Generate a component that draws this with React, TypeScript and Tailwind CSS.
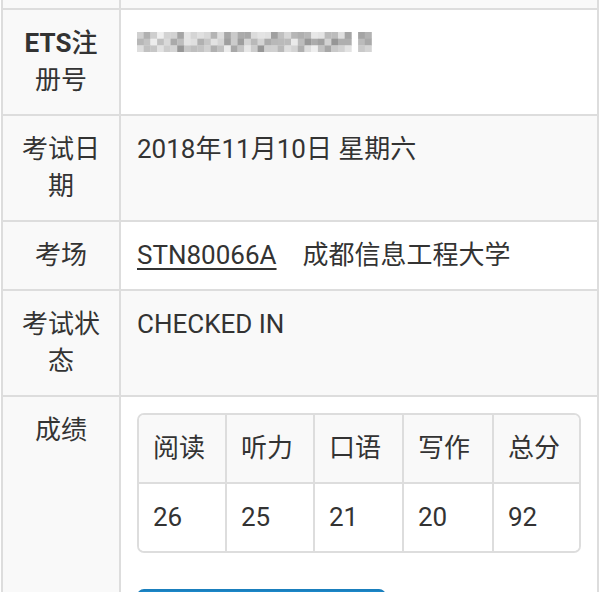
import React from "react";

function Mosaic() {
  const cols = 35;
  const rows = 3;
  const s = 6.7;
  let seed = 12345;
  const rand = () => {
    seed = (seed * 1103515245 + 12345) % 2147483648;
    return seed / 2147483648;
  };
  const cells: React.ReactNode[] = [];
  for (let r = 0; r < rows; r++) {
    for (let c = 0; c < cols; c++) {
      if (c === 32) continue;
      const v = Math.floor(150 + rand() * 90);
      cells.push(
        <rect key={`${r}-${c}`} x={c * s} y={r * s} width={s + 0.3} height={s + 0.3} fill={`rgb(${v},${v},${v})`} />
      );
    }
  }
  return (
    <svg width={cols * s} height={rows * s} className="block">
      {cells}
    </svg>
  );
}

function Row({
  label,
  striped,
  children,
}: {
  label: React.ReactNode;
  striped: boolean;
  children: React.ReactNode;
}) {
  return (
    <div className="flex border-t-2 border-[#dddddd]">
      <div className="w-[118px] shrink-0 bg-[#f9f9f9] px-[15px] py-[15px] text-center border-r-2 border-[#dddddd]">
        {label}
      </div>
      <div className={`flex-1 min-w-0 px-[16px] py-[15px] ${striped ? "bg-[#f9f9f9]" : "bg-white"}`}>{children}</div>
    </div>
  );
}

export default function App() {
  const heads = ["阅读", "听力", "口语", "写作", "总分"];
  const scores = ["26", "25", "21", "20", "92"];
  return (
    <div className="w-[600px] h-[592px] overflow-hidden bg-white font-[Roboto,'Noto_Sans_CJK_SC',sans-serif] text-[26px] leading-[37px] text-[#333333]">
      <div className="mx-[1px] border-x-2 border-[#dddddd]">
        <div className="flex h-[8px]">
          <div className="w-[118px] shrink-0 bg-[#f9f9f9] border-r-2 border-[#dddddd]" />
          <div className="flex-1 bg-[#f9f9f9]" />
        </div>
        <Row
          striped={false}
          label={
            <>
              <span className="font-bold">ETS</span>
              <span className="font-medium">注</span>册号
            </>
          }
        >
          <div className="pt-[7px]">
            <Mosaic />
          </div>
        </Row>
        <Row striped={true} label="考试日期">
          2018年11月10日 星期六
        </Row>
        <Row striped={false} label="考场">
          <span className="underline underline-offset-[4px] decoration-[2px]">STN80066A</span>
          <span className="ml-[26px]">成都信息工程大学</span>
        </Row>
        <Row striped={true} label="考试状态">
          CHECKED IN
        </Row>
        <Row striped={false} label="成绩">
          <div className="mt-[1px] border-2 border-[#dddddd] rounded-[7px] overflow-hidden mb-[36px]">
            <div className="grid grid-cols-[86px_88px_89px_90px_1fr] bg-[#f9f9f9]">
              {heads.map((h, i) => (
                <div key={h} className={`px-[14px] py-[15px] ${i > 0 ? "border-l-2 border-[#dddddd]" : ""}`}>
                  {h}
                </div>
              ))}
            </div>
            <div className="grid grid-cols-[86px_88px_89px_90px_1fr] bg-white border-t-2 border-[#dddddd]">
              {scores.map((s, i) => (
                <div key={i} className={`px-[14px] py-[15px] ${i > 0 ? "border-l-2 border-[#dddddd]" : ""}`}>
                  {s}
                </div>
              ))}
            </div>
          </div>
          <button className="w-[249px] h-[70px] rounded-[7px] bg-[#1b87c9] border-2 border-[#1a7fbd]" />
        </Row>
      </div>
    </div>
  );
}
